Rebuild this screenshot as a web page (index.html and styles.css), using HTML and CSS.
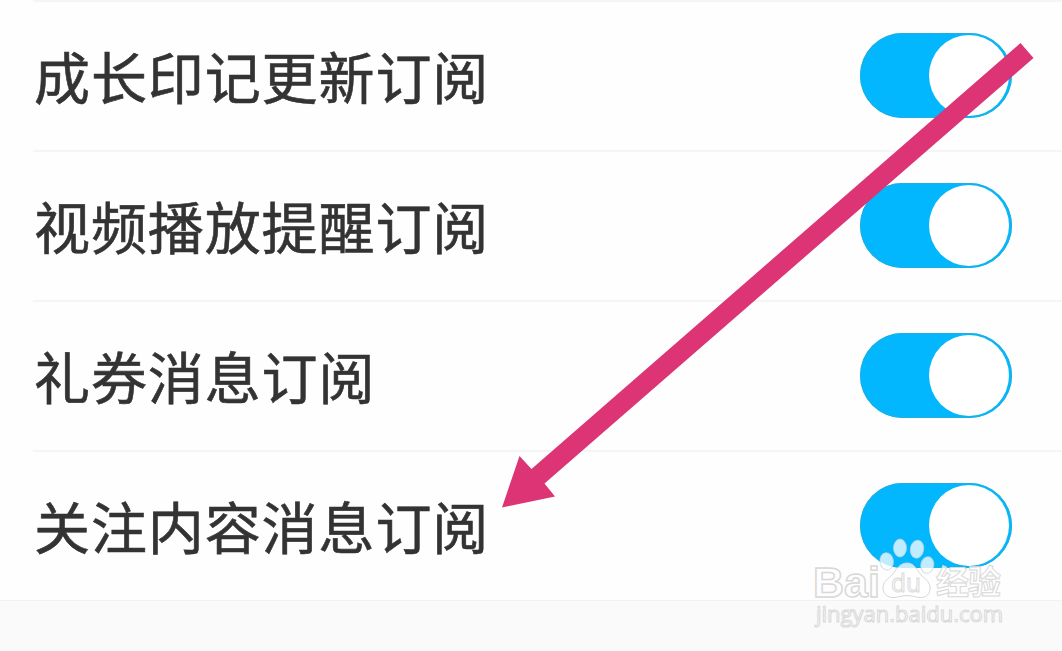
FILE: index.html
```html
<!DOCTYPE html>
<html lang="zh-CN">
<head>
    <meta charset="utf-8" />
    <meta name="viewport" content="width=device-width, initial-scale=1" />
    <title>消息订阅</title>
    <link rel="stylesheet" href="styles.css">
</head>
<body>
    <div class="page">
        <ul class="list">
            <li class="row">
                <span class="label">成长印记更新订阅</span>
                <span class="switch"><span class="knob"></span></span>
            </li>
            <li class="row">
                <span class="label">视频播放提醒订阅</span>
                <span class="switch"><span class="knob"></span></span>
            </li>
            <li class="row">
                <span class="label">礼券消息订阅</span>
                <span class="switch"><span class="knob"></span></span>
            </li>
            <li class="row">
                <span class="label">关注内容消息订阅</span>
                <span class="switch"><span class="knob"></span></span>
            </li>
        </ul>

        <svg class="arrow" viewBox="0 0 1062 651">
            <polygon points="502,507.5 519.5,456 531.5,469 1020.5,43 1033.5,58 544.5,483.5 555,496.5" />
        </svg>

        <svg class="watermark" viewBox="0 0 200 100">
            <!-- paw -->
            <g class="paw">
                <ellipse cx="76.7" cy="26.3" rx="6.7" ry="8.7" transform="rotate(-8 76.7 26.3)" />
                <ellipse cx="90" cy="13" rx="6.5" ry="9" />
                <ellipse cx="107" cy="14.2" rx="6.7" ry="9" transform="rotate(10 107 14.2)" />
                <ellipse cx="117.3" cy="30" rx="6.5" ry="8.3" transform="rotate(10 117.3 30)" />
            </g>
            <path class="pad" d="M97 28C89 28 86 36 81 41C76 45 73 48 73 53C73 59 78 63 84 62.5C89 62 93 60.5 97 60.5C101 60.5 105 62 110 62.5C116 63 120 59 120 53C120 48 117 45 112 41C107 36 105 28 97 28Z" />
            <text class="brand" x="3" y="61.5" textLength="67" lengthAdjust="spacingAndGlyphs">Bai</text>
            <text class="du" x="81" y="57" textLength="30" lengthAdjust="spacingAndGlyphs">du</text>
            <text class="brand-cn" x="126" y="58.5" textLength="65">经验</text>
            <text class="site" x="6" y="86.5" textLength="187" lengthAdjust="spacingAndGlyphs">jingyan.baidu.com</text>
        </svg>
    </div>
</body>
</html>
```

FILE: styles.css
```css
body {
    margin: 0;
    background-color: #fafafa;
    font-family: "Liberation Sans", "Noto Sans CJK SC", sans-serif;
}
.page {
    position: relative;
    height: 651px;
    overflow: hidden;
}
.list {
    list-style: none;
    margin: 0;
    padding: 0 0 0 33px;
    background-color: #fefefe;
    border-bottom: 1px solid #f2f2f2;
}
.row {
    display: flex;
    align-items: center;
    justify-content: space-between;
    box-sizing: border-box;
    height: 150px;
    padding-right: 50px;
    padding-bottom: 2px;
    border-top: 2px solid #f5f5f5;
}
.label {
    font-family: "Noto Sans CJK SC", sans-serif;
    font-size: 56px;
    letter-spacing: 0.9px;
    line-height: 84px;
    color: #333;
    -webkit-text-stroke: 0.6px #333;
    padding-left: 1px;
}
.switch {
    display: flex;
    justify-content: flex-end;
    box-sizing: border-box;
    width: 152px;
    height: 85px;
    padding: 2px 3px 2px 0;
    border-radius: 43px;
    background-color: #02b7fe;
    box-shadow: inset 0 0 0 1px #20afdf;
}
.knob {
    width: 80px;
    height: 81px;
    border-radius: 50%;
    background-color: #fff;
}
.arrow {
    position: absolute;
    top: 0;
    left: 0;
    width: 1062px;
    height: 651px;
    fill: #dc3474;
}
.watermark {
    position: absolute;
    left: 810px;
    top: 535px;
    width: 200px;
    height: 100px;
    fill: rgba(255, 255, 255, 0.75);
    stroke: #d8d8d8;
    stroke-width: 1;
}
.paw {
    stroke: rgba(190, 210, 220, 0.7);
}
.pad {
    stroke: #d4d8da;
}
.brand {
    font: bold 43px "Liberation Sans", sans-serif;
    stroke-width: 1.5;
}
.du {
    font: 26px "Open Sans", sans-serif;
}
.brand-cn {
    font: bold 33px "Noto Sans CJK SC", sans-serif;
}
.site {
    font: 22px "Open Sans", sans-serif;
    stroke-width: 1;
}
```
